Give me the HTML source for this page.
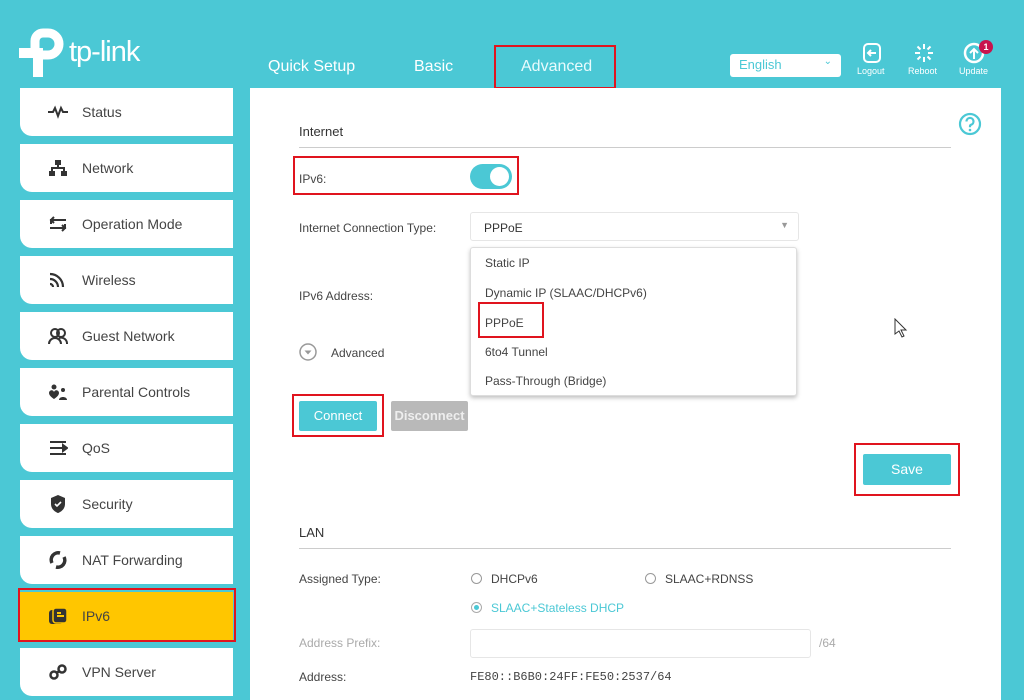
<!DOCTYPE html>
<html><head><meta charset="utf-8"><style>
*{margin:0;padding:0;box-sizing:border-box}
body{width:1024px;height:700px;overflow:hidden;background:#4bc8d5;font-family:"Liberation Sans",Arial,sans-serif;position:relative;color:#333}
.abs{position:absolute}
.nav{color:#fff;font-size:16px}
.item{position:absolute;left:20px;width:213px;height:48px;background:#fff;border-radius:0 0 0 12px}
.item span{position:absolute;left:62px;top:16px;font-size:14px;color:#444}
.item svg{position:absolute;left:28px;top:15px}
.main{position:absolute;left:250px;top:88px;width:751px;height:612px;background:#fff}
.lbl{position:absolute;font-size:12px;color:#444}
.red{position:absolute;border:2px solid #e0141e}
.opt{position:absolute;left:14px;font-size:12px;color:#444}
</style></head><body>
<!-- logo -->
<svg class="abs" style="left:19px;top:28px" width="46" height="50" viewBox="0 0 46 50">
<path d="M0 25 H19 V49" fill="none" stroke="#fff" stroke-width="10"/>
<path d="M16 20 V13 A8 8 0 0 1 24 5 H29 A11 11 0 0 1 29 27 H24" fill="none" stroke="#fff" stroke-width="9" stroke-linecap="round"/>
</svg>
<div class="abs" style="left:69px;top:36px;font-size:29px;color:#fff;letter-spacing:-1px">tp-link</div>
<div class="abs nav" style="left:268px;top:58px">Quick Setup</div>
<div class="abs nav" style="left:414px;top:58px">Basic</div>
<div class="abs nav" style="left:521px;top:58px;color:#e8fbfd">Advanced</div>
<div class="red" style="left:494px;top:45px;width:122px;height:44px"></div>
<div class="abs" style="left:730px;top:54px;width:111px;height:23px;background:#fff;border-radius:3px;font-size:13px;color:#4bc8d5;padding:3px 9px">English<span style="position:absolute;right:9px;top:2px;font-size:10px">&#8964;</span></div>
<svg class="abs" style="left:862px;top:42px" width="20" height="22" viewBox="0 0 20 22"><rect x="2" y="2" width="16" height="18" rx="4" fill="none" stroke="#fff" stroke-width="2"/><path d="M14 11H6M9 8l-3 3 3 3" fill="none" stroke="#fff" stroke-width="2"/></svg>
<div class="abs" style="left:857px;top:66px;font-size:9px;color:#fff">Logout</div>
<svg class="abs" style="left:913px;top:42px" width="22" height="22" viewBox="0 0 22 22" stroke="#fff" stroke-width="2"><path d="M11 2v5M11 15v5M2 11h5M15 11h5M4.5 4.5l3 3M14.5 14.5l3 3M4.5 17.5l3-3M14.5 7.5l3-3"/></svg>
<div class="abs" style="left:908px;top:66px;font-size:9px;color:#fff">Reboot</div>
<svg class="abs" style="left:963px;top:42px" width="22" height="22" viewBox="0 0 22 22"><circle cx="11" cy="11" r="9" fill="none" stroke="#fff" stroke-width="2.5"/><path d="M11 17V7M7 11l4-4 4 4" fill="none" stroke="#fff" stroke-width="2"/></svg>
<div class="abs" style="left:979px;top:40px;width:14px;height:14px;border-radius:7px;background:#c8134d;color:#fff;font-size:9px;text-align:center;line-height:14px;font-weight:bold">1</div>
<div class="abs" style="left:959px;top:66px;font-size:9px;color:#fff">Update</div>

<!-- sidebar -->
<div class="item" style="top:88px"><svg width="20" height="18" viewBox="0 0 20 18"><path d="M0 9h5l2-4 3 8 3-8 2 4h5" fill="none" stroke="#333" stroke-width="2"/></svg><span>Status</span></div>
<div class="item" style="top:144px"><svg width="20" height="18" viewBox="0 0 20 18" fill="#333"><rect x="7" y="1" width="6" height="5"/><rect x="1" y="12" width="6" height="5"/><rect x="13" y="12" width="6" height="5"/><path d="M10 6v3M4 12V9h12v3" stroke="#333" stroke-width="2" fill="none"/></svg><span>Network</span></div>
<div class="item" style="top:200px"><svg width="20" height="18" viewBox="0 0 20 18" fill="none" stroke="#333" stroke-width="2"><path d="M18 5H3v4M6 2L3 5l3 3M2 13h15V9M14 10l3 3-3 3"/></svg><span>Operation Mode</span></div>
<div class="item" style="top:256px"><svg width="20" height="18" viewBox="0 0 20 18" fill="none" stroke="#333" stroke-width="2.2"><path d="M2 3a13 13 0 0 1 13 13M2 8a8 8 0 0 1 8 8M2 13a3 3 0 0 1 3 3"/></svg><span>Wireless</span></div>
<div class="item" style="top:312px"><svg width="20" height="18" viewBox="0 0 20 18" fill="none" stroke="#333" stroke-width="2"><circle cx="7" cy="6" r="4"/><circle cx="13" cy="6" r="4"/><path d="M1 17a6 6 0 0 1 12 0M11 11a6 6 0 0 1 8 6"/></svg><span>Guest Network</span></div>
<div class="item" style="top:368px"><svg width="20" height="18" viewBox="0 0 20 18" fill="#333"><circle cx="6" cy="4" r="2.5"/><path d="M1 10c0-3 4-4 5-1 1-3 5-2 5 1 0 3-5 6-5 6s-5-3-5-6z"/><circle cx="15" cy="7" r="2"/><path d="M11 17c0-4 8-4 8 0z"/></svg><span>Parental Controls</span></div>
<div class="item" style="top:424px"><svg width="20" height="18" viewBox="0 0 20 18" fill="#333" stroke="#333" stroke-width="2"><path d="M2 3h16M2 9h14M2 15h16" fill="none"/><path d="M15 6l4 3-4 3z"/></svg><span>QoS</span></div>
<div class="item" style="top:480px"><svg width="20" height="18" viewBox="0 0 20 18"><path d="M10 0l7 3v6c0 5-4 8-7 9-3-1-7-4-7-9V3z" fill="#333"/><path d="M7 9l2 2 4-4" fill="none" stroke="#fff" stroke-width="1.6"/></svg><span>Security</span></div>
<div class="item" style="top:536px"><svg width="20" height="18" viewBox="0 0 20 18" fill="none" stroke="#333" stroke-width="3.5"><path d="M4 12A7 7 0 0 1 12 2M16 6a7 7 0 0 1-8 10"/></svg><span>NAT Forwarding</span></div>
<div class="item" style="top:592px;background:#ffc600;border-radius:0"><svg width="20" height="18" viewBox="0 0 20 18"><rect x="1" y="3" width="14" height="14" rx="3" fill="#333"/><rect x="5" y="1" width="14" height="15" rx="3" fill="#333" stroke="#ffc600" stroke-width="1.5"/><path d="M9 6h4M9 9h7" stroke="#ffc600" stroke-width="2"/></svg><span>IPv6</span></div>
<div class="red" style="left:18px;top:588px;width:218px;height:54px"></div>
<div class="item" style="top:648px"><svg width="20" height="18" viewBox="0 0 20 18" fill="none" stroke="#333" stroke-width="2.5"><circle cx="6" cy="12" r="3.5"/><circle cx="14" cy="6" r="3.5"/><path d="M8 10l4-2"/></svg><span>VPN Server</span></div>

<!-- main -->
<div class="main">
<div class="lbl" style="left:49px;top:36px;font-size:13px;color:#333">Internet</div>
<div class="abs" style="left:49px;top:59px;width:652px;height:1px;background:#ccc"></div>
<svg class="abs" style="left:708px;top:24px" width="24" height="24" viewBox="0 0 24 24"><circle cx="12" cy="12" r="10" fill="none" stroke="#4bc8d5" stroke-width="2.2"/><path d="M8.5 9.5a3.5 3.5 0 1 1 4.5 3.3c-.7.3-1 .8-1 1.5v1" fill="none" stroke="#4bc8d5" stroke-width="2.2"/><circle cx="12" cy="18" r="1.3" fill="#4bc8d5"/></svg>
<div class="lbl" style="left:49px;top:84px">IPv6:</div>
<div class="abs" style="left:220px;top:76px;width:42px;height:25px;border-radius:13px;background:#4bc8d5"><div class="abs" style="right:3px;top:3px;width:19px;height:19px;border-radius:10px;background:#fff"></div></div>
<div class="red" style="left:43px;top:68px;width:226px;height:39px"></div>
<div class="lbl" style="left:49px;top:133px">Internet Connection Type:</div>
<div class="abs" style="left:220px;top:124px;width:329px;height:29px;border:1px solid #e6e6e6;border-radius:3px;font-size:12px;padding:8px 13px">PPPoE<span style="position:absolute;right:9px;top:7px;color:#999;font-size:9px">&#9660;</span></div>
<div class="lbl" style="left:49px;top:201px">IPv6 Address:</div>
<svg class="abs" style="left:49px;top:255px" width="18" height="18" viewBox="0 0 18 18"><circle cx="9" cy="9" r="8" fill="none" stroke="#999" stroke-width="1.5"/><path d="M5.5 7.5l3.5 4 3.5-4z" fill="#999"/></svg>
<div class="lbl" style="left:81px;top:258px">Advanced</div>
<div class="abs" style="left:220px;top:159px;width:327px;height:149px;background:#fff;border:1px solid #ddd;border-radius:3px;box-shadow:0 2px 4px rgba(0,0,0,.25)">
<div class="opt" style="top:8px">Static IP</div>
<div class="opt" style="top:38px">Dynamic IP (SLAAC/DHCPv6)</div>
<div class="opt" style="top:68px">PPPoE</div>
<div class="opt" style="top:97px">6to4 Tunnel</div>
<div class="opt" style="top:126px">Pass-Through (Bridge)</div>
</div>
<div class="red" style="left:228px;top:214px;width:66px;height:36px"></div>
<div class="abs" style="left:49px;top:313px;width:78px;height:30px;background:#4bc8d5;border-radius:2px;color:#fff;font-size:13px;text-align:center;line-height:30px">Connect</div>
<div class="red" style="left:42px;top:306px;width:92px;height:43px"></div>
<div class="abs" style="left:141px;top:313px;width:77px;height:30px;background:#b9b9b9;border-radius:2px;color:#eee;font-size:13px;text-align:center;line-height:30px;font-weight:bold">Disconnect</div>
<div class="abs" style="left:613px;top:366px;width:88px;height:31px;background:#4bc8d5;border-radius:2px;color:#fff;font-size:14px;text-align:center;line-height:31px">Save</div>
<div class="red" style="left:604px;top:355px;width:106px;height:53px"></div>
<div class="lbl" style="left:49px;top:437px;font-size:13px;color:#333">LAN</div>
<div class="abs" style="left:49px;top:460px;width:652px;height:1px;background:#ccc"></div>
<div class="lbl" style="left:49px;top:484px">Assigned Type:</div>
<div class="abs" style="left:221px;top:485px;width:11px;height:11px;border:1px solid #999;border-radius:6px"></div>
<div class="lbl" style="left:241px;top:484px">DHCPv6</div>
<div class="abs" style="left:395px;top:485px;width:11px;height:11px;border:1px solid #999;border-radius:6px"></div>
<div class="lbl" style="left:415px;top:484px">SLAAC+RDNSS</div>
<div class="abs" style="left:221px;top:514px;width:11px;height:11px;border:1px solid #aaa;border-radius:6px"><div class="abs" style="left:2px;top:2px;width:5px;height:5px;border-radius:3px;background:#4bc8d5"></div></div>
<div class="lbl" style="left:241px;top:513px;color:#4bc8d5">SLAAC+Stateless DHCP</div>
<div class="lbl" style="left:49px;top:548px;color:#aaa">Address Prefix:</div>
<div class="abs" style="left:220px;top:541px;width:341px;height:29px;border:1px solid #e6e6e6;border-radius:3px"></div>
<div class="lbl" style="left:569px;top:548px;color:#aaa">/64</div>
<div class="lbl" style="left:49px;top:582px">Address:</div>
<div class="lbl" style="left:220px;top:582px;font-family:'Liberation Mono',monospace">FE80::B6B0:24FF:FE50:2537/64</div>
</div>
<svg class="abs" style="left:894px;top:318px" width="14" height="20" viewBox="0 0 14 20"><path d="M1 1v15l4-3 3 6 2-1-3-6h5z" fill="#fff" stroke="#333" stroke-width="1"/></svg>
</body></html>
